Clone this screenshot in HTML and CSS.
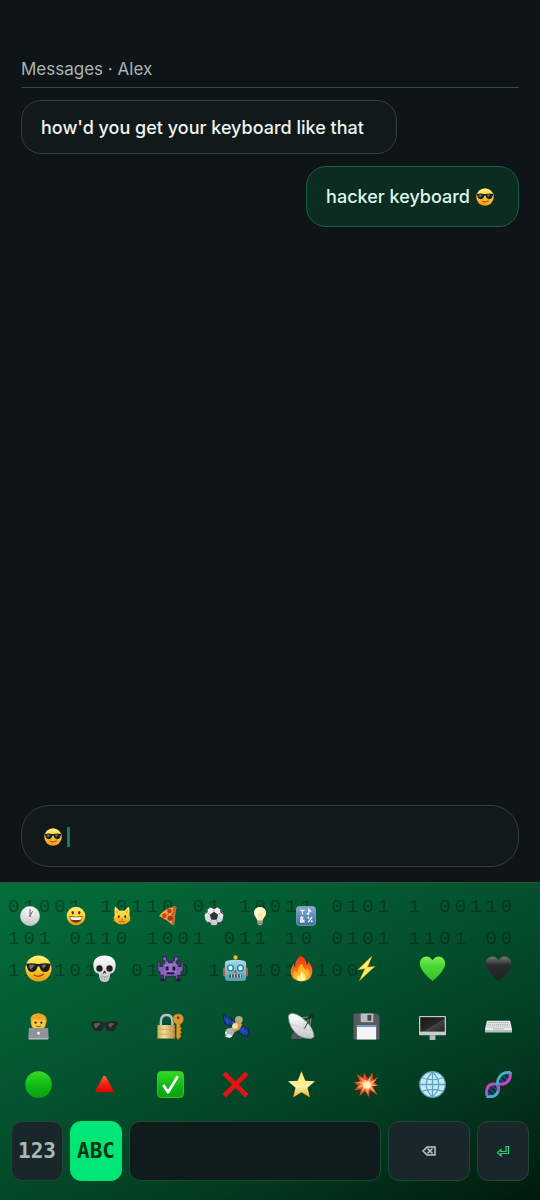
FILE: index.html
```
<!DOCTYPE html>
<html lang="en">
<head>
    <meta charset="utf-8">
    <meta name="viewport" content="width=device-width, initial-scale=1">
    <title>Messages</title>
    <link rel="stylesheet" href="styles.css">
</head>
<body>
    <svg class="sprite" aria-hidden="true">
        <defs>
            <linearGradient id="g-face" x1="0" y1="0" x2="0" y2="1"><stop offset="0" stop-color="#fff27a"/><stop offset=".5" stop-color="#ffcf35"/><stop offset="1" stop-color="#f0970c"/></linearGradient>
            <linearGradient id="g-white" x1="0" y1="0" x2="0" y2="1"><stop offset="0" stop-color="#fff"/><stop offset="1" stop-color="#c4c7ca"/></linearGradient>
            <linearGradient id="g-dark" x1="0" y1="0" x2="0" y2="1"><stop offset="0" stop-color="#777b7e"/><stop offset=".35" stop-color="#292c2e"/><stop offset="1" stop-color="#202224"/></linearGradient>
            <linearGradient id="g-green" x1="0" y1="0" x2="0" y2="1"><stop offset="0" stop-color="#7df05a"/><stop offset=".4" stop-color="#47d936"/><stop offset="1" stop-color="#38bd27"/></linearGradient>
            <linearGradient id="g-ball" x1="0" y1="0" x2="0" y2="1"><stop offset="0" stop-color="#35dc22"/><stop offset=".6" stop-color="#0cb516"/><stop offset="1" stop-color="#0c9e12"/></linearGradient>
            <linearGradient id="g-fire" x1="0" y1="0" x2="0" y2="1"><stop offset="0" stop-color="#ef2c11"/><stop offset=".6" stop-color="#ff721b"/><stop offset="1" stop-color="#ffb12e"/></linearGradient>
            <linearGradient id="g-red" x1="0" y1="0" x2="0" y2="1"><stop offset="0" stop-color="#ff6350"/><stop offset=".5" stop-color="#f3220d"/><stop offset="1" stop-color="#e10600"/></linearGradient>
            <linearGradient id="g-star" x1="0" y1="0" x2="0" y2="1"><stop offset="0" stop-color="#ffe36b"/><stop offset=".6" stop-color="#fff0a0"/><stop offset="1" stop-color="#f4a722"/></linearGradient>
            <linearGradient id="g-blue" x1="0" y1="0" x2="0" y2="1"><stop offset="0" stop-color="#87acd2"/><stop offset="1" stop-color="#3d6da3"/></linearGradient>
            <linearGradient id="g-robot" x1="0" y1="0" x2="0" y2="1"><stop offset="0" stop-color="#a9dbe9"/><stop offset="1" stop-color="#559bb6"/></linearGradient>
            <linearGradient id="g-gold" x1="0" y1="0" x2="1" y2="0"><stop offset="0" stop-color="#cfaa59"/><stop offset=".4" stop-color="#f3dc9b"/><stop offset="1" stop-color="#b88a38"/></linearGradient>
            <linearGradient id="g-screen" x1="0" y1="0" x2="1" y2="1"><stop offset="0" stop-color="#161616"/><stop offset=".55" stop-color="#282828"/><stop offset=".56" stop-color="#444"/><stop offset="1" stop-color="#222"/></linearGradient>
        </defs>

        <symbol id="cool" viewBox="0 0 28 28">
            <circle cx="14" cy="14" r="13.500" fill="url(#g-face)"/>
            <path d="M1.200 9.200Q7 7.600 13 9.400h2Q21 7.600 26.800 9.200l-.3 2q-.7.4-1 2.500-.6 3.800-4.800 3.800-4.300 0-5.300-4.300-.3-1.500-1.400-1.500t-1.400 1.500q-1 4.300-5.300 4.300-4.200 0-4.800-3.800-.3-2.100-1-2.500z" fill="#1b1b1d"/>
            <path d="M4 10.300q3-.8 6.500.1l-4.300 4.600q-2-1.500-2.200-4.700M17.300 10.400q3-.9 5-.3l-3.200 4.200q-1.600-1.300-1.800-3.900" fill="#686c6c"/>
            <path d="M9.500 20.700q5 3 9.500-.7" fill="none" stroke="#8b4b06" stroke-width="1.400" stroke-linecap="round"/>
        </symbol>
        <symbol id="clock" viewBox="0 0 28 28">
            <circle cx="14" cy="14" r="13.500" fill="url(#g-white)" stroke="#c3c8c9" stroke-width=".8"/>
            <path d="M14 3v2M14 23v2M3 14h2M23 14h2M8.500 4.500l1 1.700M19.500 4.500l-1 1.700M4.500 8.500l1.700 1M4.500 19.500l1.700-1M8.500 23.500l1-1.700M19.500 23.500l-1-1.700M23.500 8.500l-1.700 1M23.500 19.500l-1.700-1" stroke="#bbbfc0"/>
            <path d="M14 14V5M14 14l3.300-6" stroke="#555" stroke-width="1.300" stroke-linecap="round"/><circle cx="14" cy="14" r="1.300" fill="#777"/>
        </symbol>
        <symbol id="grin" viewBox="0 0 28 28">
            <circle cx="14" cy="14" r="13" fill="url(#g-face)"/>
            <ellipse cx="9.500" cy="9.500" rx="1.700" ry="2.500" fill="#5a3008"/><ellipse cx="18.500" cy="9.500" rx="1.700" ry="2.500" fill="#5a3008"/>
            <path d="M5 14q9 2 18 0-.5 9.500-9 9.500T5 14" fill="#79350b"/><path d="M6 15q8 1.700 16 0-.3 3.500-1 4-7 1.500-14 0-.8-.8-1-4" fill="#fff"/>
        </symbol>
        <symbol id="cat" viewBox="0 0 28 28">
            <path d="M4.500 1.500q1-.8 6 5.300 3.500-1 7 0 5-6.100 6-5.300 1.500 1 .8 11 2.600 6-.8 9.500-4 4-9.500 4t-9.500-4q-3.400-3.500-.8-9.500-.7-10 .8-11" fill="url(#g-face)"/>
            <path d="M6 4.500l3 4-2.500 2.500zM22 4.500l-3 4 2.500 2.500z" fill="#e9a04c"/>
            <ellipse cx="9.500" cy="15" rx="1.200" ry="2" fill="#40280a"/><ellipse cx="18.500" cy="15" rx="1.200" ry="2" fill="#40280a"/>
            <path d="M12.300 18h3.400L14 20z" fill="#ba574a"/><path d="M14 20v1q-2 2.500-4 .5M14 21q2 2.500 4 .5" fill="none" stroke="#86500c"/>
            <path d="M1 17l5 1M1 21l5-1M27 17l-5 1M27 21l-5-1" stroke="#d8a443" stroke-width=".7"/>
        </symbol>
        <symbol id="pizza" viewBox="0 0 28 28">
            <path d="M1.500 14Q9 3.500 22 1l3 3-2.500 22q-.5 1.500-2 .5Q12 19 1.500 14" fill="#f0a83a"/>
            <path d="M20 1.500q3-2.500 5.500-.5 2 3-1 4.500-2 8-1.700 20.500-1.800 2.200-3 0Q18 13 21 5.500z" fill="#b8692d"/>
            <circle cx="16" cy="7" r="3.200" fill="#c82d1b"/><circle cx="9" cy="13.500" r="3.200" fill="#d33a21"/><circle cx="17" cy="17" r="3.700" fill="#c52a1a"/>
            <path d="M13 12l2-1M19 11l1 2" stroke="#438b2b" stroke-width="1.500"/>
        </symbol>
        <symbol id="soccer" viewBox="0 0 28 28">
            <circle cx="14" cy="14" r="13" fill="url(#g-white)"/>
            <path d="M14 8l6 4.200-2.300 7h-7.400l-2.300-7zM9 1.800q5-1.800 10 0L14 4.500zM1.200 11.500L4.500 9.500 6 4.500Q2 7 1.200 11.500M26.800 11.500L23.500 9.500 22 4.500Q26 7 26.800 11.500M4 22l5 1 1.500 3.500Q6 25.500 4 22M24 22l-5 1-1.500 3.500Q22 25.500 24 22" fill="#303132"/>
            <path d="M14 5v4M5 9.500l4 3M23 9.500l-4 3M11 18.500l-2 4M17 18.500l2 4" stroke="#8f9192"/>
        </symbol>
        <symbol id="bulb" viewBox="0 0 28 28">
            <path d="M14 1.500c-5 0-8.500 3.500-8.500 8 0 5 4 6.500 4.800 11h7.400c.8-4.500 4.800-6 4.800-11 0-4.500-3.500-8-8.500-8" fill="#fff3bb"/>
            <path d="M14 3c-3 0-6 2-6 6 0 4 3 6 4 11" fill="#fffce8"/><path d="M11 10l2 3 1-2 1 2 2-3-2 10h-2z" fill="none" stroke="#f0d382" stroke-width=".8"/>
            <path d="M10.300 20.500h7.400v4.500l-2 2h-3.400l-2-2z" fill="#a7a79b"/><path d="M10.500 22.500h7M11 24.500h6" stroke="#777"/>
        </symbol>
        <symbol id="symbols" viewBox="0 0 28 28">
            <rect x=".7" y=".7" width="26.600" height="26.600" rx="4" fill="url(#g-blue)" stroke="#9db9d4" stroke-width=".8"/>
            <g fill="none" stroke="#fff" stroke-width="1.700"><path d="M6 6h6M9 6v6M18 11V5l3 3"/><path d="M12 23l-5-5q-1-2 1-2.500 2.500.5 1 2.500l-2.500 2q-1 3 2 2.500 2.500-.5 3-3.500M17 22.500l5.500-7"/></g>
            <circle cx="16.700" cy="11" r="1.700" fill="#fff"/><circle cx="17.300" cy="16.500" r="1.400" fill="#fff"/><circle cx="22" cy="21.500" r="1.400" fill="#fff"/>
        </symbol>
        <symbol id="skull" viewBox="0 0 28 28">
            <path d="M14 .5C6 .5 2 5 2.500 11.500c.3 4 1.300 7 5.500 8l1 5.500q1 3 5 3t5-3l1-5.500c4.200-1 5.200-4 5.500-8C26 5 22 .5 14 .5" fill="url(#g-white)"/>
            <ellipse cx="8.800" cy="14" rx="3.300" ry="3.400" fill="#211f20"/><ellipse cx="19.200" cy="14" rx="3.300" ry="3.400" fill="#211f20"/>
            <path d="M14 16q-2.500 3-1.300 3.500l1.300-1 1.300 1q1.200-.5-1.300-3.500" fill="#252324"/>
            <path d="M9.500 21.500q4.500 2 9 0M11.500 22v3.500M14 22.500V26M16.500 22v3.500" fill="none" stroke="#9a9d9e" stroke-width=".8"/>
        </symbol>
        <symbol id="invader" viewBox="0 0 28 28">
            <path d="M6 2h4v4h2v2h4V6h2V2h4v4h-2v3h2v3h3V7h2v10h-2v4h-4v2h3v4h-5v-5H9v5H4v-4h3v-2H3v-4H1V7h2v5h3V9h2V6H6z" fill="#8861bd" stroke="#33214f"/>
            <path d="M8 9h12v10H8z" fill="#9a73cd"/><path d="M9 12h3v4H9zM16 12h3v4h-3zM10 18h8v2h-8z" fill="#211b2c"/>
            <path d="M4 24h4v3H4zM20 24h4v3h-4z" fill="#1c1625"/>
        </symbol>
        <symbol id="robot" viewBox="0 0 28 28">
            <path d="M13 4h2v5h-2z" fill="#8c4b38"/><circle cx="14" cy="2.500" r="2.200" fill="#f7b62c"/>
            <rect x="1" y="13" width="3.500" height="9" rx="1" fill="#b85644"/><rect x="23.500" y="13" width="3.500" height="9" rx="1" fill="#b85644"/>
            <path d="M5 6q9-2 18 0 2 .5 2 3v14q0 4-4 4H7q-4 0-4-4V9q0-2.500 2-3" fill="url(#g-robot)"/>
            <g fill="#e1fcff" stroke="#188ca0" stroke-width="1.500"><circle cx="8.800" cy="13.500" r="3"/><circle cx="19.200" cy="13.500" r="3"/></g>
            <path d="M14 15l2 3.500h-4z" fill="#c94e35"/><path d="M7.500 20h13v3.500h-13z" fill="#454e54"/><path d="M10 20v3.500M13 20v3.500M16 20v3.500M19 20v3.500" stroke="#e1edf0"/>
        </symbol>
        <symbol id="fire" viewBox="0 0 28 28">
            <path d="M13 .5q6 3 6.500 10 1.500-1 1.500-4 5.500 7 4 12.500-1.500 8-11 8.500Q4.500 27 3 19.500 2 14 6 9q0 3 1.500 4Q6.500 6 13 .5" fill="url(#g-fire)"/>
            <path d="M14.500 9q1 4 4 7 1-1 1-3 4 6 1.500 10-2 4-7 4-6.500 0-8-5-.5-3 1-6 1 2 3 2.500-.5-6 4.500-9.500" fill="#ffb62b"/>
            <path d="M14 17q4 3 4.500 6.500-.5 3.500-4.500 3.500t-5-3.500q.5-1.500 2-2.500.5 1 1.500 1 0-3 1.500-5" fill="#fff299"/>
        </symbol>
        <symbol id="bolt" viewBox="0 0 28 28">
            <path d="M20 .5L4.500 15.500 12 14.500 6 27.500 23.500 11.500 15.500 12.500z" fill="#f5b52f"/><path d="M19 2.500L6.500 14.500 13.500 13.500 8 25 21 12.500 14 13z" fill="#fff06e"/>
        </symbol>
        <symbol id="heart" viewBox="0 0 28 28">
            <path d="M14 27Q5 20 1.500 12.500-.8 5 5 2q5.500-2 9 3.500Q17.500 0 23 2q5.800 3 3.500 10.500Q23 20 14 27"/>
        </symbol>
        <symbol id="coder" viewBox="0 0 28 28">
            <path d="M3 27q0-9 11-9t11 9z" fill="#2455b0"/><ellipse cx="14" cy="9.500" rx="7.800" ry="9" fill="#f7c746"/>
            <path d="M6 9Q4.500 1 13 .5 23 .5 22.500 9l-1 2q-1-3-1.500-4.500-7 1-11-.5Q7 8 7 11z" fill="#efa526"/>
            <circle cx="11" cy="10" r="1.200" fill="#43260a"/><circle cx="17" cy="10" r="1.200" fill="#43260a"/><path d="M11.500 13.500q2.500 1.500 5 0" fill="none" stroke="#955512"/>
            <path d="M4 15.500h20l.5 11.500h-21z" fill="#8f949a"/><path d="M4 26h20v1.500H4z" fill="#b9bdc0"/><circle cx="14" cy="21" r="1.500" fill="#eff1f2"/>
        </symbol>
        <symbol id="shades" viewBox="0 0 28 28">
            <path d="M0 9q7-2 13 .8h2Q21 7 28 9v3q-1 .2-1.500 2-1 5-6 5-5.500 0-5.500-5-.2-1.500-1-1.500T13 14q0 5-5.500 5-5 0-6-5-.5-1.800-1.500-2z" fill="#242628"/>
            <path d="M3 11q4-1.500 7 0l-5 5q-1.500-1-2-5M18 11q4-1.500 6 0l-4 4.500q-2-1-2-4.500" fill="#5c605e"/>
        </symbol>
        <symbol id="lock" viewBox="0 0 28 28">
            <path d="M4 14V9q0-7 6-7t6 7v5" fill="none" stroke="#b7c0c3" stroke-width="2.500"/>
            <path d="M.5 12.500h18v14H.5z" fill="url(#g-gold)"/><path d="M1 17h17M1 22h17" stroke="#d0ab66"/>
            <path d="M22 1q5.500 0 5.500 5.500 0 3.500-3.500 5v3l1.500 1.500-1.500 2 1.500 2-1.500 2 1 2-3 3.500-2-2V11.500q-3.500-1.500-3.500-5Q16.500 1 22 1" fill="#d79a31" stroke="#9c681c" stroke-width=".6"/><circle cx="22" cy="5" r="1.500" fill="#654619"/>
        </symbol>
        <symbol id="satellite" viewBox="0 0 28 28">
            <path d="M10 9l8 9" stroke="#888" stroke-width="2"/>
            <path d="M1 2l9 4 1 8-8-3zM18 12l9.500 5-1 8-10-5z" fill="#173fa0" stroke="#0a2264"/><path d="M5.500 4v8M2 6.500l9 3.500M22 14.500v8M17 16l10 5" stroke="#3f69c0" stroke-width=".6"/>
            <path d="M9 17l3-6 5-3 4 4-3 5-5 3z" fill="#d99a3d"/><circle cx="17.500" cy="7" r="4" fill="#b8a383"/><circle cx="13.500" cy="13.500" r="3" fill="#e9dfbd"/>
            <circle cx="8" cy="20" r="4.500" fill="#aeb4b8"/><path d="M3 19l8 5-3 2-4-1z" fill="#e9edef"/><path d="M7 20l-4 5" stroke="#89959a"/>
        </symbol>
        <symbol id="dish" viewBox="0 0 28 28">
            <path d="M7 18h7l2 7-2 2H4l-1-2z" fill="#50585a"/><path d="M17 12l7-8M13 5l11-1M24 4l-2 14" stroke="#828889" stroke-width="1.200"/><path d="M20 5l5-4 2 2-5 4z" fill="#222"/>
            <path d="M2 1q6-2 15 6t10 17q-1 3-5 2.500Q10 26 3.500 15 .5 9 .5 4 .5 2 2 1" fill="url(#g-white)" stroke="#92999a" stroke-width=".8"/>
            <path d="M16 16l5 10M16 16L2 11M17 16l9 3M16 16l1-8" stroke="#b9bebf" stroke-width=".6"/><path d="M17 16l4-7" stroke="#555" stroke-width="1.200"/>
        </symbol>
        <symbol id="floppy" viewBox="0 0 28 28">
            <path d="M1 .5h24l2.500 2.500v24.500H.5V1z" fill="#555b60"/><path d="M8 .5h13v9H8z" fill="#b9bebf"/><path d="M15 2h4v6h-4z" fill="#43494d"/><path d="M4 12.500h20v15H4z" fill="#f3f5f6"/><path d="M4 12.500h20v2H4z" fill="#7099bb"/>
        </symbol>
        <symbol id="monitor" viewBox="0 0 28 28">
            <rect y="3" width="28" height="20" rx="1" fill="#c8cbcb"/><path d="M1.300 4.300h25.400v15H1.300z" fill="url(#g-screen)"/><path d="M11 23h6v5h-6z" fill="#b5baba"/>
        </symbol>
        <symbol id="keys" viewBox="0 0 28 28">
            <path d="M2 8h24l2 9v3H0v-3z" fill="#edf0f0"/><path d="M0 17.500h28V20H0z" fill="#bcc1c2"/>
            <path d="M3 10h22M2.500 12.300h23M2 14.500h24" stroke="#a5abad" stroke-width="1.200" stroke-dasharray="1.600 .6"/><path d="M8 16.500h12" stroke="#acb1b2"/>
        </symbol>
        <symbol id="green" viewBox="0 0 28 28"><circle cx="14" cy="14" r="13.800" fill="url(#g-ball)"/></symbol>
        <symbol id="triangle" viewBox="0 0 28 28"><path d="M14 5q1 0 1.500 1l8 14.500q.5 1.500-1 1.500h-17q-1.500 0-1-1.500l8-14.500q.5-1 1.500-1" fill="url(#g-red)"/></symbol>
        <symbol id="check" viewBox="0 0 28 28"><rect x=".5" y=".5" width="27" height="27" rx="4" fill="url(#g-ball)" stroke="#2fcf2a"/><path d="M6.500 14.500l5 7.500L21.500 5.500" fill="none" stroke="#fff" stroke-width="2.800" stroke-linejoin="round"/></symbol>
        <symbol id="cross" viewBox="0 0 28 28"><path d="M4 .8l10 10 10-10L27.500 4l-10 10 10 10-3.500 3.500-10-10-10 10L.5 24l10-10-10-10z" fill="#e31313"/></symbol>
        <symbol id="star" viewBox="0 0 28 28"><path d="M14 .2l3.900 9.800 10.100.6-7.800 6.700 2.600 10.200L14 22l-8.800 5.500 2.600-10.200L0 10.600l10.100-.6z" fill="url(#g-star)"/></symbol>
        <symbol id="boom" viewBox="0 0 28 28">
            <path d="M16 9l4-8 .5 8 6-3-5 6 5 3-6 1 5 9-8-5-1 7-4-6-6 5 2-7-7 1 4-5-5-3 7-1-4-8 7 4 1-5z" fill="#e94820"/>
            <path d="M15 10l3-5 0 6 6-2-4 4.500 5 1.500-6 1 4 6-6-3.500-2 5-2-5-4 3 1.500-5-6 1 4-4-4.500-2 6-.5-3-4.500 5 2.500z" fill="#ffa563"/><circle cx="14.500" cy="14.500" r="4" fill="#ffedc0"/>
        </symbol>
        <symbol id="globe" viewBox="0 0 28 28"><circle cx="14" cy="14" r="13.300" fill="#cbe7f3" stroke="#539cbc" stroke-width="1.200"/><path d="M14 1v26M1 14h26M3.500 7q10.500 4 21 0M3.500 21q10.500-4 21 0M14 1Q1 14 14 27M14 1q13 13 0 26" fill="none" stroke="#5ba5c3" stroke-width="1.300"/></symbol>
        <symbol id="dna" viewBox="0 0 28 28">
            <path d="M4 18l7 6M7 15l6 6M3 22l4 4M16 8l5 5M19 5l5 5M23 3l3 3" stroke="#2f3f9c" stroke-width="1.800"/>
            <path d="M2 26Q0 15 8 13.500q7 0 11 0 8-2 7.500-12.500" fill="none" stroke="#c348c4" stroke-width="3"/>
            <path d="M1.500 26.500Q13 28 14 19q-2-8 0-11 3-7 12.500-6.500" fill="none" stroke="#3fb3c9" stroke-width="3"/>
            <path d="M13.500 21q1.500-3 0-7.500" fill="none" stroke="#b14bd0" stroke-width="3"/>
        </symbol>
    </svg>

    <div class="phone">
        <main class="chat">
            <h1 class="chat-title">Messages · Alex</h1>
            <div class="messages">
                <p class="bubble received">how'd you get your keyboard like that</p>
                <p class="bubble sent">hacker keyboard <svg class="emoji-text" role="img" aria-label="cool"><use href="#cool"/></svg></p>
            </div>
            <label class="composer">
                <svg class="emoji-text" role="img" aria-label="cool"><use href="#cool"/></svg>
                <span class="caret"></span>
                <input class="composer-input" type="text" aria-label="Message">
            </label>
        </main>

        <section class="keyboard" aria-label="Emoji keyboard">
            <div class="bits" aria-hidden="true">
                <div>01001 10110 01 10011 0101 1 00110</div>
                <div>101 0110 1001 011 10 0101 1101 00</div>
                <div>1101011 0110 10 1011100</div>
            </div>

            <div class="categories">
                <button aria-label="Recent"><svg><use href="#clock"/></svg></button>
                <button aria-label="Smileys"><svg><use href="#grin"/></svg></button>
                <button aria-label="Animals"><svg><use href="#cat"/></svg></button>
                <button aria-label="Food"><svg><use href="#pizza"/></svg></button>
                <button aria-label="Sports"><svg><use href="#soccer"/></svg></button>
                <button aria-label="Objects"><svg><use href="#bulb"/></svg></button>
                <button aria-label="Symbols"><svg><use href="#symbols"/></svg></button>
            </div>

            <div class="emoji-grid">
                <button aria-label="Sunglasses face"><svg><use href="#cool"/></svg></button>
                <button aria-label="Skull"><svg><use href="#skull"/></svg></button>
                <button aria-label="Alien monster"><svg><use href="#invader"/></svg></button>
                <button aria-label="Robot"><svg><use href="#robot"/></svg></button>
                <button aria-label="Fire"><svg><use href="#fire"/></svg></button>
                <button aria-label="Lightning"><svg><use href="#bolt"/></svg></button>
                <button aria-label="Green heart"><svg fill="url(#g-green)"><use href="#heart"/></svg></button>
                <button aria-label="Black heart"><svg fill="url(#g-dark)"><use href="#heart"/></svg></button>
                <button aria-label="Technologist"><svg><use href="#coder"/></svg></button>
                <button aria-label="Dark sunglasses"><svg><use href="#shades"/></svg></button>
                <button aria-label="Lock with key"><svg><use href="#lock"/></svg></button>
                <button aria-label="Satellite"><svg><use href="#satellite"/></svg></button>
                <button aria-label="Satellite dish"><svg><use href="#dish"/></svg></button>
                <button aria-label="Floppy disk"><svg><use href="#floppy"/></svg></button>
                <button aria-label="Desktop computer"><svg><use href="#monitor"/></svg></button>
                <button aria-label="Keyboard"><svg><use href="#keys"/></svg></button>
                <button aria-label="Green circle"><svg><use href="#green"/></svg></button>
                <button aria-label="Red triangle"><svg><use href="#triangle"/></svg></button>
                <button aria-label="Check mark"><svg><use href="#check"/></svg></button>
                <button aria-label="Cross mark"><svg><use href="#cross"/></svg></button>
                <button aria-label="Star"><svg><use href="#star"/></svg></button>
                <button aria-label="Collision"><svg><use href="#boom"/></svg></button>
                <button aria-label="Globe"><svg><use href="#globe"/></svg></button>
                <button aria-label="DNA"><svg><use href="#dna"/></svg></button>
            </div>

            <div class="key-row">
                <button class="key">123</button>
                <button class="key key-active">ABC</button>
                <button class="key key-space" aria-label="Space"></button>
                <button class="key key-delete" aria-label="Delete">
                    <svg viewBox="0 0 14 10"><path d="M5 1h8v8H5L1 5z" fill="#243033" stroke="#bcc8c5" stroke-width="1.500"/><path d="M5.500 2.500l5 5M10.500 2.500l-5 5" stroke="#bcc8c5" stroke-width="1.500"/></svg>
                </button>
                <button class="key key-enter" aria-label="Enter">
                    <svg viewBox="0 0 14 12"><path d="M10 1.500h2.500v7H5V11L1.500 7.500 5 4.500v2h5z" fill="none" stroke="#22d477" stroke-width="1.200"/></svg>
                </button>
            </div>
        </section>
    </div>
</body>
</html>
```
FILE: styles.css
```
* {
    box-sizing: border-box;
}
body {
    margin: 0;
    background: #0e1418;
    color: #eef5f2;
    font-family: Inter, "Liberation Sans", sans-serif;
}
button {
    padding: 0;
    border: none;
    background: none;
    font: inherit;
    color: inherit;
    cursor: pointer;
}
.sprite {
    position: absolute;
    width: 0;
    height: 0;
}
.phone {
    display: flex;
    flex-direction: column;
    min-height: 100vh;
}

/* conversation */
.chat {
    flex: 1;
    display: flex;
    flex-direction: column;
    padding: 57px 21px 15px;
}
.chat-title {
    margin: 0 0 12px;
    padding-bottom: 5px;
    border-bottom: 1px solid #2b4940;
    color: #a9b5b2;
    font-size: 17px;
    font-weight: 400;
    line-height: 25px;
}
.messages {
    flex: 1;
    display: flex;
    flex-direction: column;
    gap: 12px;
}
.bubble {
    display: flex;
    align-items: center;
    gap: 6px;
    margin: 0;
    padding: 1px 19px 0;
    border: 1px solid #343f40;
    border-radius: 20px;
    font-size: 18px;
    font-weight: 500;
    line-height: 24px;
}
.received {
    align-self: flex-start;
    min-height: 54px;
    padding-right: 32px;
    background: #12191b;
}
.sent {
    align-self: flex-end;
    min-height: 61px;
    padding-right: 24px;
    border-color: #17603f;
    background: #0c2c22;
    color: #dcf8e9;
}
.emoji-text {
    width: 18px;
    height: 18px;
}
.composer {
    display: flex;
    align-items: center;
    min-height: 62px;
    padding: 2px 22px 0;
    border: 1px solid #343f40;
    border-radius: 28px;
    background: #12191b;
}
.caret {
    width: 3px;
    height: 20px;
    margin-left: 5px;
    background: #167f50;
}
.composer-input {
    flex: 1;
    min-width: 0;
    border: none;
    outline: none;
    background: transparent;
    color: inherit;
    font: inherit;
    font-size: 18px;
}

/* keyboard */
.keyboard {
    position: relative;
    padding: 10px 11px 19px;
    border-top: 1px solid #28523e;
    background: linear-gradient(155deg, #046f3b 0%, #04522e 42%, #033d22 70%, #021a0d 100%);
}
.bits {
    position: absolute;
    top: 8px;
    left: 8px;
    right: 0;
    overflow: hidden;
    color: rgba(0, 30, 15, 0.5);
    font-family: "Liberation Mono", monospace;
    font-size: 19px;
    line-height: 32px;
    letter-spacing: 4px;
    white-space: nowrap;
}
.categories,
.emoji-grid,
.key-row {
    position: relative;
}
.categories {
    display: flex;
    gap: 8px;
}
.categories button {
    width: 38px;
    height: 46px;
}
.categories svg {
    width: 20px;
    height: 20px;
}
.categories svg,
.emoji-grid svg {
    display: block;
    margin: auto;
}
.emoji-grid {
    display: grid;
    grid-template-columns: repeat(8, 1fr);
    margin: 0 -2px 0 -5px;
}
.emoji-grid button {
    height: 58px;
}
.emoji-grid svg {
    width: 27px;
    height: 27px;
}
.key-row {
    display: flex;
    gap: 7px;
    margin-top: 8px;
}
.key {
    flex: 0 0 52px;
    height: 60px;
    border: 1px solid #1c4936;
    border-radius: 11px;
    background: #19272b;
    color: #a9b8b5;
    font-family: "DejaVu Sans Mono", monospace;
    font-size: 21px;
    font-weight: bold;
}
.key-active {
    border-color: #00e676;
    background: #00e676;
    color: #033718;
}
.key-space {
    flex: 1;
    background: #101c1b;
}
.key-delete {
    flex-basis: 82px;
}
.key svg {
    display: block;
    width: 14px;
    height: 12px;
    margin: auto;
}
```
